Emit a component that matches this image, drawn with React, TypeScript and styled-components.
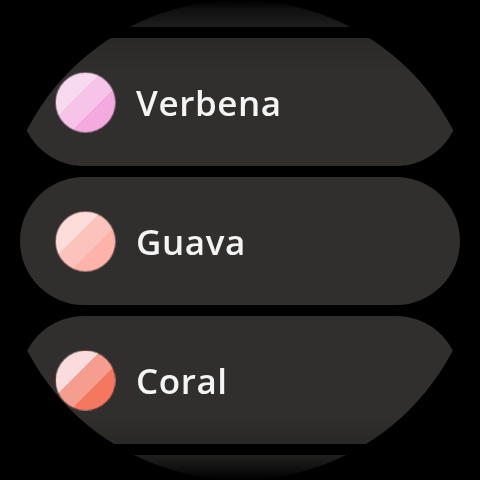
import React from "react";
import styled, { createGlobalStyle } from "styled-components";

const GlobalStyle = createGlobalStyle`
  html, body {
    margin: 0;
    padding: 0;
    background: #000000;
  }
`;

const fade = `linear-gradient(
  to bottom,
  transparent 0px,
  rgba(0, 0, 0, 0.35) 10px,
  rgba(0, 0, 0, 0.6) 26px,
  rgba(0, 0, 0, 0.88) 40px,
  #000 70px,
  #000 415px,
  rgba(0, 0, 0, 0.88) 442px,
  rgba(0, 0, 0, 0.65) 456px,
  rgba(0, 0, 0, 0.3) 470px,
  transparent 480px
)`;

const Screen = styled.div`
  width: 480px;
  height: 480px;
  border-radius: 50%;
  overflow: hidden;
  background: #000000;
  -webkit-mask-image: ${fade};
  mask-image: ${fade};
`;

const List = styled.div`
  display: flex;
  flex-direction: column;
  gap: 11px;
  margin-top: -101px;
`;

const Chip = styled.div`
  flex: 0 0 auto;
  height: 128px;
  margin: 0 20px;
  padding-left: 35px;
  border-radius: 64px;
  background: #302f2e;
  display: flex;
  align-items: center;
  gap: 20px;
`;

const Swatch = styled.div<{ $c1: string; $c2: string; $c3: string }>`
  width: 61px;
  height: 61px;
  border-radius: 50%;
  box-sizing: border-box;
  border: 1px solid rgba(0, 0, 0, 0.45);
  background: linear-gradient(
    135deg,
    ${(p) => p.$c1} 0 38%,
    ${(p) => p.$c2} 38% 62%,
    ${(p) => p.$c3} 62% 100%
  );
`;

const Label = styled.span`
  font-family: "Open Sans", "Liberation Sans", sans-serif;
  font-weight: 600;
  font-size: 35px;
  color: #f4f4f4;
  letter-spacing: 0.6px;
`;

type Swatch = { name: string; c1: string; c2: string; c3: string } | null;

// null = chip scrolled past the edge, nothing of its content is visible
const colors: Swatch[] = [
  null,
  { name: "Verbena", c1: "#f7daef", c2: "#f6c4e8", c3: "#f4aadf" },
  { name: "Guava", c1: "#fedcd9", c2: "#fcc2bc", c3: "#fdb2aa" },
  { name: "Coral", c1: "#fadcde", c2: "#f59d8f", c3: "#f47760" },
  null,
];

export default function App() {
  return (
    <>
      <GlobalStyle />
      <Screen>
        <List>
          {colors.map((c, i) => (
            <Chip key={i}>
              {c && (
                <>
                  <Swatch $c1={c.c1} $c2={c.c2} $c3={c.c3} />
                  <Label>{c.name}</Label>
                </>
              )}
            </Chip>
          ))}
        </List>
      </Screen>
    </>
  );
}
